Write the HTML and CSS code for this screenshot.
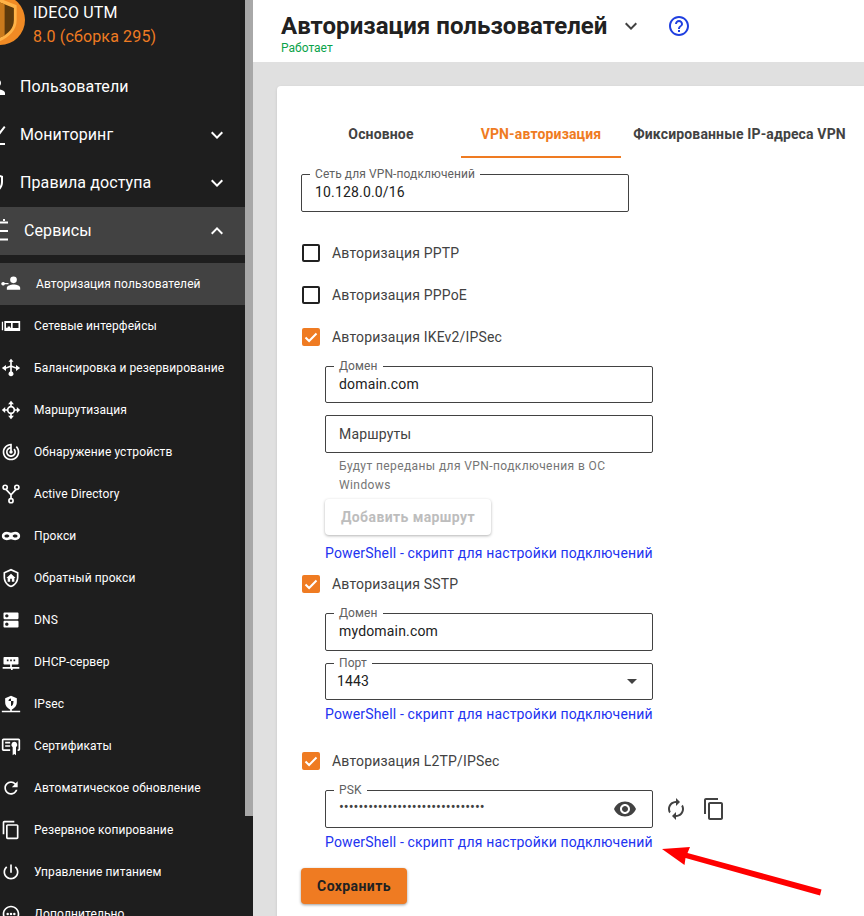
FILE: index.html
```html
<!DOCTYPE html>
<html lang="ru">
<head>
<meta charset="utf-8">
<title>IDECO UTM</title>
<link rel="stylesheet" href="styles.css">
</head>
<body>
<div class="app">
  <aside class="side">
    <div class="side-inner">
      <div class="brand">
        <svg class="logo" viewBox="0 0 54 54"><circle cx="27" cy="27" r="27" fill="#f08a24"/><path d="M27 4l18 7v16c0 11-8 18-18 23-10-5-18-12-18-23V11z" fill="#ffb347"/><path d="M27 8l15 6v13c0 9-6 15-15 19-9-4-15-10-15-19V14z" fill="#5c3a0c"/><path d="M27 8l5 2v34l-5 2c-9-4-15-10-15-19V14z" fill="#c97a1c"/></svg>
        <div class="brand-text"><div class="brand-name">IDECO UTM</div><div class="brand-ver">8.0 (сборка 295)</div></div>
      </div>
      <div class="main-item"><svg class="mi" viewBox="0 0 24 24"><path d="M12 12c2.21 0 4-1.79 4-4s-1.79-4-4-4-4 1.79-4 4 1.79 4 4 4zm0 2c-2.67 0-8 1.34-8 4v2h16v-2c0-2.66-5.33-4-8-4z"/></svg><span class="mt">Пользователи</span></div>
      <div class="main-item"><svg class="mi" viewBox="0 0 24 24"><path d="M4 20h16v2H4zM19 3l1.5 1.3L13 14l-4-3-4 5-1.500-1.200L8.700 8l4 3z"/></svg><span class="mt">Мониторинг</span><svg class="chev" viewBox="0 0 24 24"><path d="M16.590 8.590L12 13.170 7.410 8.590 6 10l6 6 6-6z"/></svg></div>
      <div class="main-item"><svg class="mi mi-r" viewBox="0 0 24 24"><path d="M12 2L4 5v6c0 5 3.400 9.700 8 11 4.600-1.300 8-6 8-11V5zm6 9c0 4-2.600 7.700-6 8.900C8.600 18.700 6 15 6 11V6.400l6-2.200 6 2.200z"/></svg><span class="mt mt-r">Правила доступа</span><svg class="chev" viewBox="0 0 24 24"><path d="M16.590 8.590L12 13.170 7.410 8.590 6 10l6 6 6-6z"/></svg></div>
      <div class="main-item active"><svg class="mi mi-s" viewBox="0 0 24 24"><path d="M3 2.500v2h18v-2zM3 11v2h18v-2zM3 19.500v2h18v-2zM16 0h2v3h-2z"/></svg><span class="mt mt-s">Сервисы</span><svg class="chev" viewBox="0 0 24 24"><path d="M12 8l-6 6 1.410 1.410L12 10.830l4.590 4.580L18 14z"/></svg></div>
      <nav class="subs">
        <div class="sub active"><svg class="si" viewBox="0 0 24 24"><circle cx="15" cy="7" r="4"/><path d="M15 12.500c-3 0-8 1.500-8 4v2.500h16v-2.500c0-2.500-4-4-8-4zM2.500 9.500a2.200 2.200 0 1 0 2.100 2.800H9v-1.600H4.600a2.200 2.200 0 0 0-2.100-1.200z"/></svg><span class="st st-a">Авторизация пользователей</span></div>
        <div class="sub"><svg class="si" viewBox="0 0 24 24"><path fill-rule="evenodd" d="M1 7h1.500v10H1zM4 6h19v12H4zM14 8.500v6h7v-6zM6 8.500V14h2v-1.500h3V14h1V8.500z"/></svg><span class="st">Сетевые интерфейсы</span></div>
        <div class="sub"><svg class="si" viewBox="0 0 24 24"><path d="M12 1l3 3.500h-2V9l5 2V8.500l5 3.500-5 3.500V13l-5-2v5.200a3 3 0 1 1-2 0V11l-5 2v2.500L1 12l5-3.500V11l5-2V4.500H9z"/></svg><span class="st">Балансировка и резервирование</span></div>
        <div class="sub"><svg class="si" viewBox="0 0 24 24"><path d="M12 1l3.500 4H13v3h-2V5H8.500zM12 23l-3.500-4H11v-3h2v3h2.500zM1 12l4-3.500V11h3v2H5v2.500zM23 12l-4 3.500V13h-3v-2h3V8.500z"/><path fill-rule="evenodd" d="M12 7a5 5 0 1 0 0 10 5 5 0 0 0 0-10zm0 2a3 3 0 1 1 0 6 3 3 0 0 1 0-6z"/></svg><span class="st">Маршрутизация</span></div>
        <div class="sub"><svg class="si" viewBox="0 0 24 24"><path d="M19.070 4.930l-1.410 1.410C19.100 7.790 20 9.790 20 12c0 4.420-3.580 8-8 8s-8-3.580-8-8c0-4.080 3.050-7.440 7-7.930v2.020C8.160 6.570 6 9.030 6 12c0 3.310 2.690 6 6 6s6-2.690 6-6c0-1.660-.67-3.160-1.760-4.240l-1.410 1.410C15.550 9.900 16 10.900 16 12c0 2.210-1.790 4-4 4s-4-1.790-4-4c0-1.860 1.280-3.410 3-3.860v2.140c-.6.350-1 .98-1 1.720 0 1.100.9 2 2 2s2-.9 2-2c0-.74-.4-1.380-1-1.720V2h-1C6.480 2 2 6.480 2 12s4.480 10 10 10 10-4.480 10-10c0-2.760-1.120-5.260-2.930-7.070z"/></svg><span class="st">Обнаружение устройств</span></div>
        <div class="sub"><svg class="si line" viewBox="0 0 24 24"><circle cx="5" cy="4" r="2.500"/><circle cx="19" cy="4" r="2.500"/><circle cx="12" cy="20" r="2.500"/><path d="M6 6.500L12 13l6-6.500M12 13v4.500"/></svg><span class="st">Active Directory</span></div>
        <div class="sub"><svg class="si" viewBox="0 0 24 24"><path fill-rule="evenodd" d="M7 7c2 0 3.500 1 5 1s3-1 5-1c3.500 0 6 2.200 6 5s-2.500 5-6 5c-2 0-3.500-1-5-1s-3 1-5 1c-3.500 0-6-2.200-6-5s2.500-5 6-5zm0 3.200c-1.600 0-2.800.6-2.800 1.800s1.200 1.800 2.800 1.800 3-.8 3-1.800-1.400-1.800-3-1.800zm10 0c-1.600 0-3 .8-3 1.800s1.400 1.800 3 1.800 2.800-.6 2.800-1.800-1.200-1.800-2.800-1.800z"/></svg><span class="st">Прокси</span></div>
        <div class="sub"><svg class="si" viewBox="0 0 24 24"><path d="M12 1L3 5v6c0 5.600 3.800 10.700 9 12 5.200-1.300 9-6.400 9-12V5zm7 10c0 4.500-3 8.700-7 9.900-4-1.200-7-5.400-7-9.900V6.300l7-3.100 7 3.100z"/><path d="M12 7l-5.500 5H8v4.500h3V13h2v3.500h3V12h1.500z"/></svg><span class="st">Обратный прокси</span></div>
        <div class="sub"><svg class="si" viewBox="0 0 24 24"><path d="M20 13H4c-.55 0-1 .45-1 1v6c0 .55.45 1 1 1h16c.55 0 1-.45 1-1v-6c0-.55-.45-1-1-1zM7 19c-1.100 0-2-.9-2-2s.9-2 2-2 2 .9 2 2-.9 2-2 2zM20 3H4c-.55 0-1 .45-1 1v6c0 .55.45 1 1 1h16c.55 0 1-.45 1-1V4c0-.55-.45-1-1-1zM7 9c-1.100 0-2-.9-2-2s.9-2 2-2 2 .9 2 2-.9 2-2 2z"/></svg><span class="st">DNS</span></div>
        <div class="sub"><svg class="si" viewBox="0 0 24 24"><path fill-rule="evenodd" d="M4 6h16c.6 0 1 .4 1 1v7c0 .6-.4 1-1 1h-7v3h9v2h-8v1.500h-2V20H2v-2h9v-3H4c-.6 0-1-.4-1-1V7c0-.6.4-1 1-1zm3 3v2h2V9zm4 0v2h2V9zm4 0v2h2V9z"/></svg><span class="st">DHCP-сервер</span></div>
        <div class="sub"><svg class="si" viewBox="0 0 24 24"><path fill-rule="evenodd" d="M12 2l7 3v5c0 4-2.800 7.400-6 8.500V20h10v2H1v-2h10v-1.500C7.800 17.400 5 14 5 10V5zm0 3.500a3 3 0 0 0-3 3h3zm0 3v6c1.800 0 3-2 3-6z"/></svg><span class="st">IPsec</span></div>
        <div class="sub"><svg class="si" viewBox="0 0 24 24"><path fill-rule="evenodd" d="M3 3h18c1.100 0 2 .9 2 2v11c0 1.100-.9 2-2 2h-1v-2h1V5H3v11h8v2H3c-1.100 0-2-.9-2-2V5c0-1.100.9-2 2-2zm2 4h6v2H5zm0 4h6v2H5zm11-4a3.500 3.500 0 0 1 2 6.400V23l-2-1.500L14 23v-9.600A3.500 3.500 0 0 1 16 7z"/></svg><span class="st">Сертификаты</span></div>
        <div class="sub"><svg class="si" viewBox="0 0 24 24"><path d="M17.650 6.350C16.200 4.900 14.210 4 12 4c-4.420 0-7.990 3.580-7.990 8s3.570 8 7.990 8c3.730 0 6.840-2.550 7.730-6h-2.080c-.82 2.330-3.040 4-5.650 4-3.310 0-6-2.690-6-6s2.690-6 6-6c1.660 0 3.140.69 4.220 1.780L13 11h7V4l-2.350 2.350z"/></svg><span class="st">Автоматическое обновление</span></div>
        <div class="sub"><svg class="si" viewBox="0 0 24 24"><path d="M16 1H4c-1.100 0-2 .9-2 2v14h2V3h12V1zm3 4H8c-1.100 0-2 .9-2 2v14c0 1.100.9 2 2 2h11c1.100 0 2-.9 2-2V7c0-1.100-.9-2-2-2zm0 16H8V7h11v14z"/></svg><span class="st">Резервное копирование</span></div>
        <div class="sub"><svg class="si" viewBox="0 0 24 24"><path d="M13 3h-2v10h2V3zm4.830 2.170l-1.420 1.420C17.990 7.860 19 9.810 19 12c0 3.870-3.130 7-7 7s-7-3.130-7-7c0-2.190 1.010-4.140 2.580-5.420L6.170 5.170C4.230 6.820 3 9.260 3 12c0 4.970 4.030 9 9 9s9-4.030 9-9c0-2.740-1.230-5.180-3.170-6.830z"/></svg><span class="st">Управление питанием</span></div>
        <div class="sub"><svg class="si" viewBox="0 0 24 24"><path d="M12 2C6.480 2 2 6.480 2 12s4.480 10 10 10 10-4.480 10-10S17.520 2 12 2zm0 18c-4.410 0-8-3.590-8-8s3.590-8 8-8 8 3.590 8 8-3.590 8-8 8z"/><circle cx="8" cy="12" r="1.500"/><circle cx="12" cy="12" r="1.500"/><circle cx="16" cy="12" r="1.500"/></svg><span class="st">Дополнительно</span></div>
      </nav>
    </div>
    <div class="scroll"><div class="thumb"></div></div>
  </aside>
  <main class="content">
    <header class="top">
      <div class="title-row">
        <h1 class="title">Авторизация пользователей</h1>
        <svg class="title-chev" viewBox="0 0 24 24"><path d="M16.590 8.590L12 13.170 7.410 8.590 6 10l6 6 6-6z"/></svg>
        <svg class="help" viewBox="0 0 24 24"><path d="M11 18h2v-2h-2v2zm1-16C6.480 2 2 6.480 2 12s4.480 10 10 10 10-4.480 10-10S17.520 2 12 2zm0 18c-4.410 0-8-3.590-8-8s3.590-8 8-8 8 3.590 8 8-3.590 8-8 8zm0-14c-2.210 0-4 1.790-4 4h2c0-1.100.9-2 2-2s2 .9 2 2c0 2-3 1.750-3 5h2c0-2.250 3-2.500 3-5 0-2.210-1.790-4-4-4z"/></svg>
      </div>
      <div class="status">Работает</div>
    </header>
    <section class="page">
      <div class="card">
        <div class="tabs">
          <div class="tab">Основное</div>
          <div class="tab on">VPN-авторизация</div>
          <div class="tab wide">Фиксированные IP-адреса VPN</div>
        </div>
        <div class="field f-net"><span class="legend">Сеть для VPN-подключений</span><span class="val">10.128.0.0/16</span></div>
        <div class="check c-1"><span class="box"></span>Авторизация PPTP</div>
        <div class="check c-2"><span class="box"></span>Авторизация PPPoE</div>
        <div class="check c-2"><span class="box on"><svg viewBox="0 0 18 18"><path d="M3.500 9.500l3.600 3.500 7.400-7.500" /></svg></span>Авторизация IKEv2/IPSec</div>
        <div class="nest">
          <div class="field f-a"><span class="legend">Домен</span><span class="val">domain.com</span></div>
          <div class="field f-b"><span class="val ph">Маршруты</span></div>
          <p class="hint">Будут переданы для VPN-подключения в ОС Windows</p>
          <div class="btn-off">Добавить маршрут</div>
          <a class="link l-a">PowerShell - скрипт для настройки подключений</a>
        </div>
        <div class="check c-3"><span class="box on"><svg viewBox="0 0 18 18"><path d="M3.500 9.500l3.600 3.500 7.400-7.500" /></svg></span>Авторизация SSTP</div>
        <div class="nest">
          <div class="field f-c"><span class="legend">Домен</span><span class="val">mydomain.com</span></div>
          <div class="field f-d"><span class="legend">Порт</span><span class="val v-port">1443</span><span class="caret"></span></div>
          <a class="link l-b">PowerShell - скрипт для настройки подключений</a>
        </div>
        <div class="check c-4"><span class="box on"><svg viewBox="0 0 18 18"><path d="M3.500 9.500l3.600 3.500 7.400-7.500" /></svg></span>Авторизация L2TP/IPSec</div>
        <div class="nest">
          <div class="psk-row">
            <div class="field f-e"><span class="legend">PSK</span><span class="val dots">••••••••••••••••••••••••••••••</span>
              <svg class="eye" viewBox="0 0 24 24"><path d="M12 4.500C7 4.500 2.730 7.610 1 12c1.730 4.390 6 7.500 11 7.500s9.270-3.110 11-7.500c-1.730-4.390-6-7.500-11-7.500zM12 17c-2.760 0-5-2.240-5-5s2.240-5 5-5 5 2.240 5 5-2.240 5-5 5zm0-8c-1.660 0-3 1.340-3 3s1.340 3 3 3 3-1.340 3-3-1.340-3-3-3z"/></svg></div>
            <svg class="act" viewBox="0 0 24 24"><path d="M12 6v3l4-4-4-4v3c-4.420 0-8 3.580-8 8 0 1.570.46 3.030 1.240 4.260L6.700 14.800c-.45-.83-.7-1.790-.7-2.800 0-3.310 2.690-6 6-6zm6.760 1.740L17.300 9.200c.44.84.7 1.790.7 2.800 0 3.310-2.690 6-6 6v-3l-4 4 4 4v-3c4.420 0 8-3.580 8-8 0-1.570-.46-3.030-1.240-4.260z"/></svg>
            <svg class="act" viewBox="0 0 24 24"><path d="M16 1H4c-1.100 0-2 .9-2 2v14h2V3h12V1zm3 4H8c-1.100 0-2 .9-2 2v14c0 1.100.9 2 2 2h11c1.100 0 2-.9 2-2V7c0-1.100-.9-2-2-2zm0 16H8V7h11v14z"/></svg>
          </div>
          <a class="link l-c">PowerShell - скрипт для настройки подключений</a>
        </div>
        <div class="save">Сохранить</div>
      </div>
    </section>
  </main>
  <svg class="arrow" viewBox="0 0 864 916"><path d="M662 849l28-2-2.500 6 134 36.500-1.500 6-134.500-37.500-1 7z" fill="#ff0000"/></svg>
</div>
</body>
</html>
```
FILE: styles.css
```css
* { box-sizing: border-box; }
html, body { margin: 0; padding: 0; height: 100%; overflow: hidden; }
body { font-family: Roboto, "Liberation Sans", sans-serif; background: #e0e0e0; color: #212121; }
.app { position: relative; display: flex; width: 864px; height: 916px; overflow: hidden; }

.side { display: flex; width: 253px; flex: none; background: #1e1e1e; }
.side-inner { width: 245px; flex: none; overflow: hidden; }
.scroll { width: 8px; flex: none; }
.thumb { height: 816px; background: #a8a8a8; }

.brand { display: flex; gap: 8px; height: 63px; }
.logo { width: 50px; height: 50px; margin: -5px 0 0 -25px; flex: none; }
.brand-text { font-size: 16px; line-height: 24px; padding-top: 1px; letter-spacing: .15px; }
.brand-name { color: #fff; }
.brand-ver { color: #ef7b22; }

.main-item { display: flex; align-items: center; height: 48px; color: #fff; font-size: 16px; letter-spacing: .1px; }
.main-item.active { background: #424242; }
.mi { width: 24px; height: 24px; margin-left: -15px; fill: #fff; flex: none; }
.mi-r { margin-left: -17px; }
.mi-s { margin-left: -13px; }
.mt { margin: -2px 0 0 11px; flex: 1; }
.mt-r { margin-left: 13px; }
.mt-s { margin-left: 13px; }
.chev { width: 24px; height: 24px; fill: #fff; margin-right: 16px; flex: none; }

.subs { padding-top: 8px; }
.sub { display: flex; align-items: center; height: 42px; color: #fff; font-size: 12px; letter-spacing: .1px; white-space: nowrap; }
.sub.active { background: #424242; }
.si { width: 20px; height: 20px; margin-left: 1px; fill: #fff; flex: none; }
.si.line { fill: none; stroke: #fff; stroke-width: 2; }
.st { margin-left: 13px; }
.st-a { margin-left: 15px; }

.content { flex: 1; min-width: 0; display: flex; flex-direction: column; }
.top { height: 62px; flex: none; background: #fff; padding: 13px 0 0 28px; }
.title-row { display: flex; align-items: center; height: 26px; }
.title { margin: 0; font-size: 24px; line-height: 26px; font-weight: 700; letter-spacing: .04px; color: #212121; }
.title-chev { width: 24px; height: 24px; margin-left: 12px; fill: #424242; }
.help { width: 24px; height: 24px; margin-left: 24px; fill: #1f3fe0; }
.status { font-size: 12px; line-height: 14px; color: #0aa34a; margin-top: 2px; }

.page { flex: 1; padding: 24px 0 0 24px; }
.card { background: #fff; border-radius: 4px 0 0 0; height: 900px; padding: 24px 0 0 24px; box-shadow: 0 1px 3px rgba(0,0,0,.12); }

.tabs { display: flex; height: 48px; }
.tab { width: 160px; text-align: center; font-size: 14px; line-height: 48px; font-weight: 700; letter-spacing: .15px; color: #424242; height: 48px; white-space: nowrap; }
.tab.on { color: #ef7b22; border-bottom: 2px solid #ef7b22; }
.tab.wide { width: 237px; }

.field { position: relative; width: 328px; border: 1px solid #424242; border-radius: 2px; height: 38px; display: flex; align-items: center; padding-left: 13px; }
.legend { position: absolute; top: -7px; left: 8px; background: #fff; padding: 0 5px; font-size: 12px; line-height: 13px; letter-spacing: .1px; color: #616161; }
.val { font-size: 14px; letter-spacing: .17px; color: #212121; margin-top: -2px; }
.ph { color: #424242; margin-top: 0; }
.f-net { margin-top: 16px; }

.check { display: flex; align-items: center; height: 24px; font-size: 14px; letter-spacing: .17px; color: #424242; gap: 12px; }
.c-1 { margin-top: 29px; }
.c-2 { margin-top: 18px; }
.c-3 { margin-top: 10px; }
.c-4 { margin-top: 26px; }
.box { width: 18px; height: 18px; margin-left: 1px; border: 2px solid #212121; border-radius: 2px; flex: none; }
.box.on { background: #ef7b22; border: none; }
.box svg { display: block; width: 18px; height: 18px; fill: none; stroke: #fff; stroke-width: 2; }

.nest { padding-left: 24px; }
.f-a { margin-top: 17px; height: 37px; }
.f-b { margin-top: 12px; height: 38px; }
.hint { margin: 4px 0 0; width: 300px; padding-left: 14px; font-size: 12px; line-height: 19px; letter-spacing: .4px; color: #757575; }
.btn-off { margin-top: 4px; width: 166px; height: 36px; border-radius: 4px; background: #fff; color: #bdbdbd; font-size: 14px; font-weight: 700; letter-spacing: .4px; text-align: center; line-height: 36px; box-shadow: 0 1px 3px rgba(0,0,0,.3); }
.link { display: block; font-size: 14px; line-height: 18px; letter-spacing: .16px; color: #2233f0; white-space: nowrap; }
.l-a { margin-top: 9px; }
.l-b { margin-top: 5px; }
.l-c { margin-top: 5px; }
.f-c { margin-top: 17px; }
.f-d { margin-top: 12px; height: 37px; }
.v-port { margin-left: -2px; }
.caret { position: absolute; right: 15px; top: 15px; width: 0; height: 0; border-left: 5px solid transparent; border-right: 5px solid transparent; border-top: 5px solid #424242; }

.psk-row { display: flex; align-items: center; margin-top: 17px; gap: 11px; }
.f-e { flex: none; }
.dots { font-size: 14.4px; letter-spacing: 0; color: #424242; margin-top: -4px; }
.eye { position: absolute; right: 15px; top: 6px; width: 24px; height: 24px; fill: #424242; }
.act { width: 24px; height: 24px; fill: #424242; flex: none; }
.act + .act { margin-left: 3px; }

.save { margin-top: 17px; width: 106px; height: 36px; border-radius: 4px; background: #ef7b22; color: #212121; font-size: 14px; font-weight: 700; letter-spacing: .4px; text-align: center; line-height: 36px; box-shadow: 0 1px 3px rgba(0,0,0,.4); }

.arrow { position: absolute; inset: 0; width: 864px; height: 916px; pointer-events: none; }
```
